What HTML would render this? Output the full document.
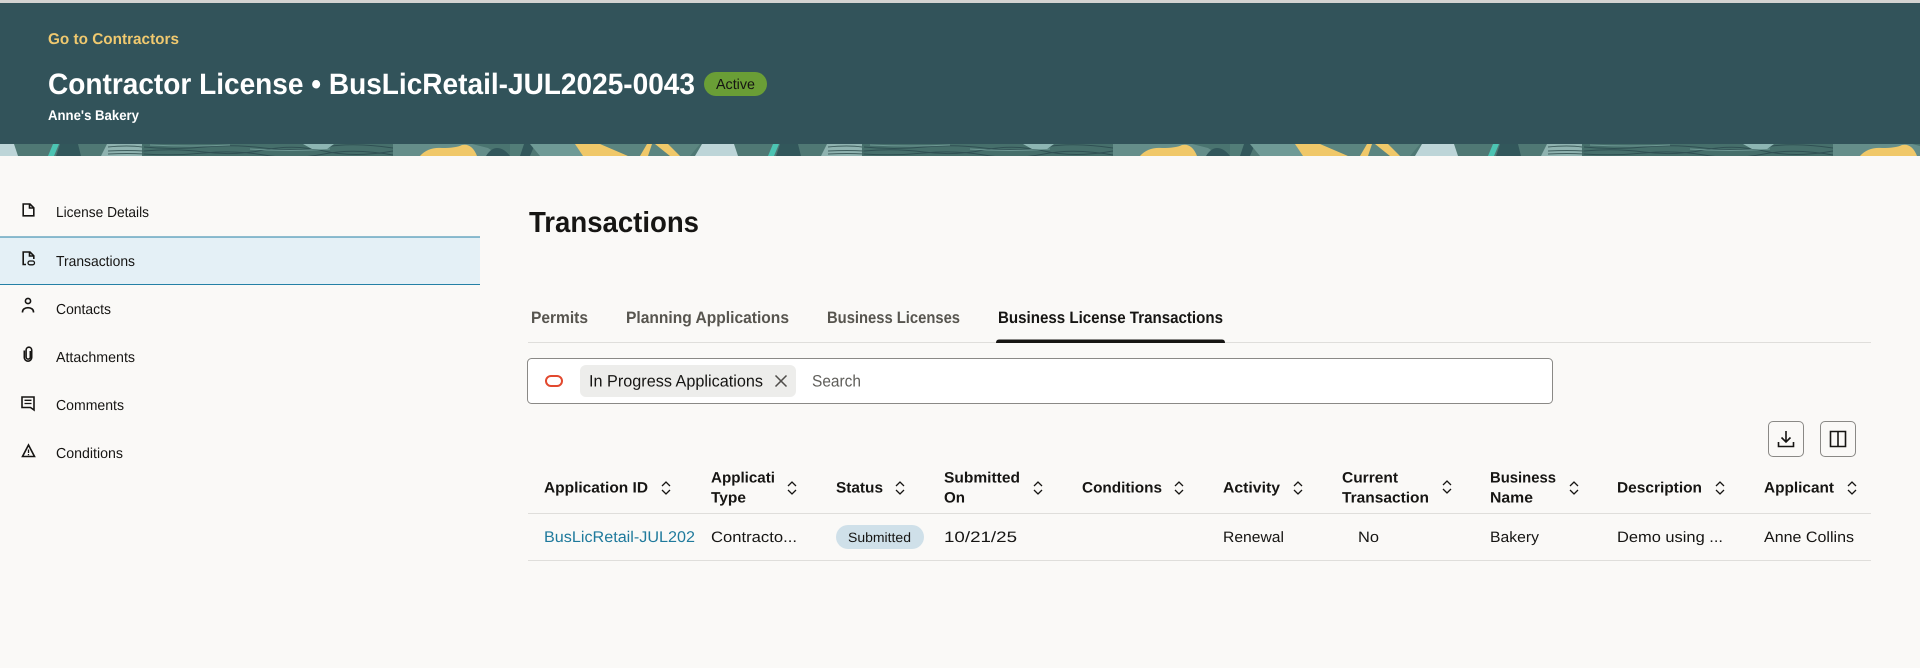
<!DOCTYPE html>
<html lang="en"><head><meta charset="utf-8"><title>Transactions</title>
<style>
html,body{margin:0;padding:0;width:1920px;height:668px;overflow:hidden;background:#faf9f7}
svg{display:block}
text{font-family:"Liberation Sans",sans-serif;white-space:pre}
.h{font-weight:700;font-size:15px;fill:#161513}
.c{font-size:15px;fill:#161513}
.n{font-size:14.5px;fill:#161513}
.t{font-size:16.5px;fill:#57554f;font-weight:700}
.s{fill:none;stroke:#161513;stroke-width:1.3}
.i{fill:none;stroke:#161513;stroke-width:1.6}
</style></head><body>
<svg width="1920" height="668" viewBox="0 0 1920 668" xmlns="http://www.w3.org/2000/svg" text-rendering="geometricPrecision">
<defs>
<pattern id="p" x="0" y="144" width="720" height="12" patternUnits="userSpaceOnUse">
<rect width="720" height="12" fill="#4f7874"/>
<polygon points="0,0 14,0 18,12 0,12" fill="#bdd5d8"/>
<polygon points="53,0 59,0 54,12 48,12" fill="#4cc4b3"/>
<polygon points="60,0 78,0 81,12 56,12" fill="#32575b"/>
<polygon points="107,0 142,0 146,12 101,12" fill="#8fb3b0"/>
<rect x="142" y="0" width="251" height="12" fill="#466f6b"/>
<path d="M108 3q20-2 34 0M108 7q20-1 36 0M108 10q20-1 36 0" stroke="#3f5f5e" stroke-width=".9" fill="none"/>
<path d="M144 3q30 3 60 0t60 1 60-1 69 1M144 7q30-3 60 1t60-2 60 1 69 0M144 10q30 2 60-1t60 2 60-1 69 1" stroke="#2f5053" stroke-width="1" fill="none"/>
<path d="M150 1q40 2 80 0M250 5q40 3 80 0" stroke="#6d9793" stroke-width="1" fill="none"/>
<polygon points="303,0 334,0 327,5 312,5" fill="#8db5b3"/>
<rect x="393" y="0" width="127" height="12" fill="#658e8a"/>
<path d="M420 12q8-9 22-8 14 0 20-3 10-2 15 11z" fill="#f0c869"/>
<polygon points="472,0 520,0 520,12 500,12 488,4" fill="#4a7470"/>
<path d="M486 12q5-8 11-8 7 0 13 8z" fill="#32575b"/>
<rect x="510" y="0" width="20" height="12" fill="#527d78"/>
<polygon points="520,12 524,0 535,0 530,12" fill="#32575b"/>
<polygon points="530,0 575,0 600,0 628,12 540,12" fill="#6f9a96"/>
<polygon points="575,0 612,0 628,12 583,12" fill="#f0c869"/>
<polygon points="600,0 700,0 690,12 628,12" fill="#5b8580"/>
<polygon points="640,12 648,12 652,0 647,0" fill="#f0c869"/>
<polygon points="655,0 668,0 680,12 670,12" fill="#f0c869"/>
<polygon points="702,0 720,0 720,12 695,12" fill="#bdd5d8"/>
</pattern>
</defs>

<!-- header -->
<rect x="0" y="0" width="1920" height="3" fill="#d4d4d2"/>
<rect x="0" y="3" width="1920" height="141" fill="#32535a"/>
<rect x="0" y="144" width="1920" height="12" fill="url(#p)"/>
<text x="48" y="44" font-size="15.500" font-weight="700" fill="#f0c96f" textLength="131" lengthAdjust="spacingAndGlyphs">Go to Contractors</text>
<text x="48" y="94" font-size="29.500" font-weight="700" fill="#fff" textLength="647" lengthAdjust="spacingAndGlyphs">Contractor License • BusLicRetail-JUL2025-0043</text>
<rect x="704" y="72" width="63" height="24" rx="12" fill="#6a9e36"/>
<text x="716" y="89" font-size="14.500" fill="#161513" textLength="39" lengthAdjust="spacingAndGlyphs">Active</text>
<text x="48" y="120" font-size="14" font-weight="700" fill="#fff" textLength="91" lengthAdjust="spacingAndGlyphs">Anne's Bakery</text>

<!-- sidebar -->
<rect x="0" y="237" width="480" height="48" fill="#e4f0f6"/>
<rect x="0" y="236.500" width="480" height="1" fill="#2480a6"/>
<rect x="0" y="284" width="480" height="1" fill="#2480a6"/>
<text class="n" x="56" y="217" textLength="93" lengthAdjust="spacingAndGlyphs">License Details</text>
<text class="n" x="56" y="266" textLength="79" lengthAdjust="spacingAndGlyphs">Transactions</text>
<text class="n" x="56" y="314" textLength="55" lengthAdjust="spacingAndGlyphs">Contacts</text>
<text class="n" x="56" y="362" textLength="79" lengthAdjust="spacingAndGlyphs">Attachments</text>
<text class="n" x="56" y="410" textLength="68" lengthAdjust="spacingAndGlyphs">Comments</text>
<text class="n" x="56" y="458" textLength="67" lengthAdjust="spacingAndGlyphs">Conditions</text>
<path class="i" d="M23.200 204h6.800l3.800 3.800v8h-10.600zM29.500 204v4h4.300"/>
<path class="i" d="M26 264.500h-2.800v-12.500h6.800l3.800 3.800v3.200M29.500 252v4h4.300"/>
<rect x="28" y="261" width="6.500" height="3.800" rx="1.900" fill="none" stroke="#161513" stroke-width="1.300"/>
<circle cx="28" cy="301" r="2.600" class="i"/>
<path class="i" d="M22.500 312.500v-.5c0-2.800 2.500-4.300 5.500-4.300s5.500 1.500 5.500 4.300v.5"/>
<path class="i" d="M30.300 351v6a2.100 2.100 0 0 1-4.200 0v-7a2.800 2.800 0 0 1 5.600 0v7.500a3.700 3.700 0 0 1-7.400 0v-7"/>
<path class="i" d="M22 397h12v13l-3.500-2.500H22z"/>
<path d="M24.500 400.300h7M24.500 403.500h7" class="s"/>
<path class="i" d="M28.500 445l6 11.500h-12z"/>
<path d="M28.500 449.500v3.500M28.500 454v1.200" class="s"/>

<!-- heading -->
<text x="529" y="232" font-size="29" font-weight="700" fill="#161513" textLength="170" lengthAdjust="spacingAndGlyphs">Transactions</text>

<!-- tabs -->
<rect x="528" y="342" width="1343" height="1" fill="#dfdedb"/>
<text class="t" x="531" y="323" textLength="57" lengthAdjust="spacingAndGlyphs">Permits</text>
<text class="t" x="626" y="323" textLength="163" lengthAdjust="spacingAndGlyphs">Planning Applications</text>
<text class="t" x="827" y="323" textLength="133" lengthAdjust="spacingAndGlyphs">Business Licenses</text>
<text class="t" x="998" y="323" textLength="225" lengthAdjust="spacingAndGlyphs" style="fill:#161513">Business License Transactions</text>
<path d="M996 343q0-3.500 3-3.500h223q3 0 3 3.500z" fill="#161513"/>

<!-- search -->
<rect x="527.500" y="358.500" width="1025" height="45" rx="4" fill="#fff" stroke="#8a8986"/>
<rect x="546" y="376" width="16" height="10" rx="5" fill="none" stroke="#e2492f" stroke-width="2"/>
<rect x="580" y="365" width="216" height="32" rx="6" fill="#ededeb"/>
<text x="589" y="386.500" font-size="16.500" fill="#161513" textLength="174" lengthAdjust="spacingAndGlyphs">In Progress Applications</text>
<path d="M775.500 375.500l11 11M786.500 375.500l-11 11" stroke="#4f4d4a" stroke-width="1.500" fill="none"/>
<text x="812" y="386.500" font-size="16.500" fill="#5f5e5a" textLength="49" lengthAdjust="spacingAndGlyphs">Search</text>

<!-- toolbar -->
<rect x="1768.500" y="421.500" width="35" height="35" rx="4.500" fill="none" stroke="#8a8986"/>
<path class="i" d="M1786 431v11M1781.500 437.500l4.500 4.500 4.500-4.500M1778.500 442v4.500h15V442"/>
<rect x="1820.500" y="421.500" width="35" height="35" rx="4.500" fill="none" stroke="#8a8986"/>
<path class="i" d="M1830.500 431.500h15v15h-15zM1838 431.500v15"/>

<!-- table header -->
<text class="h" x="544" y="492.500" textLength="104" lengthAdjust="spacingAndGlyphs">Application ID</text>
<text class="h" x="711" y="482.500" textLength="64" lengthAdjust="spacingAndGlyphs">Applicati</text>
<text class="h" x="711" y="502.500" textLength="35" lengthAdjust="spacingAndGlyphs">Type</text>
<text class="h" x="836" y="492.500" textLength="47" lengthAdjust="spacingAndGlyphs">Status</text>
<text class="h" x="944" y="482.500" textLength="76" lengthAdjust="spacingAndGlyphs">Submitted</text>
<text class="h" x="944" y="502.500" textLength="21" lengthAdjust="spacingAndGlyphs">On</text>
<text class="h" x="1082" y="492.500" textLength="80" lengthAdjust="spacingAndGlyphs">Conditions</text>
<text class="h" x="1223" y="492.500" textLength="57" lengthAdjust="spacingAndGlyphs">Activity</text>
<text class="h" x="1342" y="482.500" textLength="56" lengthAdjust="spacingAndGlyphs">Current</text>
<text class="h" x="1342" y="502.500" textLength="87" lengthAdjust="spacingAndGlyphs">Transaction</text>
<text class="h" x="1490" y="482.500" textLength="66" lengthAdjust="spacingAndGlyphs">Business</text>
<text class="h" x="1490" y="502.500" textLength="43" lengthAdjust="spacingAndGlyphs">Name</text>
<text class="h" x="1617" y="492.500" textLength="85" lengthAdjust="spacingAndGlyphs">Description</text>
<text class="h" x="1764" y="492.500" textLength="70" lengthAdjust="spacingAndGlyphs">Applicant</text>
<path class="s" d="M662 486l4-4 4 4M662 490l4 4 4-4M788 486l4-4 4 4M788 490l4 4 4-4M896 486l4-4 4 4M896 490l4 4 4-4M1034 486l4-4 4 4M1034 490l4 4 4-4M1175 486l4-4 4 4M1175 490l4 4 4-4M1294 486l4-4 4 4M1294 490l4 4 4-4M1443 485l4-4 4 4M1443 489l4 4 4-4M1570 486l4-4 4 4M1570 490l4 4 4-4M1716 486l4-4 4 4M1716 490l4 4 4-4M1848 486l4-4 4 4M1848 490l4 4 4-4"/>
<rect x="528" y="513" width="1343" height="1" fill="#dfdedb"/>

<!-- row -->
<text x="544" y="542" font-size="15.500" fill="#1f7a9c" textLength="151" lengthAdjust="spacingAndGlyphs">BusLicRetail-JUL202</text>
<text class="c" x="711" y="542" textLength="86" lengthAdjust="spacingAndGlyphs">Contracto...</text>
<rect x="836" y="525" width="88" height="24" rx="12" fill="#cfe0e9"/>
<text x="848" y="542" font-size="13.500" fill="#161513" textLength="63" lengthAdjust="spacingAndGlyphs">Submitted</text>
<text class="c" x="944" y="542" font-size="15" textLength="73" lengthAdjust="spacingAndGlyphs">10/21/25</text>
<text class="c" x="1223" y="542" textLength="61" lengthAdjust="spacingAndGlyphs">Renewal</text>
<text class="c" x="1358" y="542" textLength="21" lengthAdjust="spacingAndGlyphs">No</text>
<text class="c" x="1490" y="542" textLength="49" lengthAdjust="spacingAndGlyphs">Bakery</text>
<text class="c" x="1617" y="542" textLength="106" lengthAdjust="spacingAndGlyphs">Demo using ...</text>
<text class="c" x="1764" y="542" textLength="90" lengthAdjust="spacingAndGlyphs">Anne Collins</text>
<rect x="528" y="560" width="1343" height="1" fill="#dfdedb"/>
</svg>
</body></html>
